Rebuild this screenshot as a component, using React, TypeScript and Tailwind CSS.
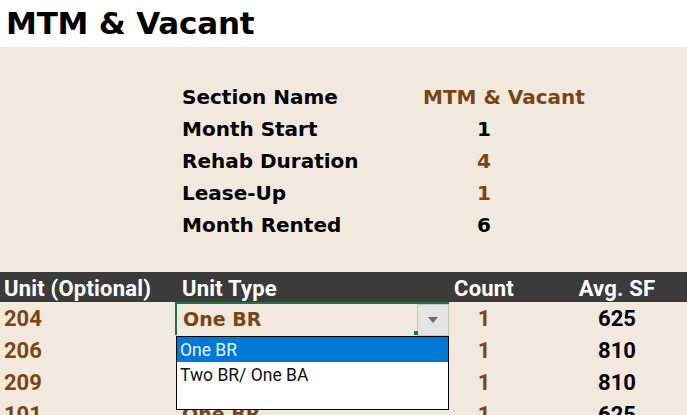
import React from "react";

const brown = "text-[#7a4512]";

const info = [
  { label: "Section Name", value: "MTM & Vacant", brown: true, wide: true },
  { label: "Month Start", value: "1", brown: false },
  { label: "Rehab Duration", value: "4", brown: true },
  { label: "Lease-Up", value: "1", brown: true },
  { label: "Month Rented", value: "6", brown: false },
];

const units = [
  { unit: "204", type: "One BR", count: "1", sf: "625" },
  { unit: "206", type: "Two BR/ One BA", count: "1", sf: "810" },
  { unit: "209", type: "Two BR/ One BA", count: "1", sf: "810" },
  { unit: "101", type: "One BR", count: "1", sf: "625" },
];

const tahoma = "font-['DejaVu_Sans',sans-serif]";
const calibri = "font-['Roboto',sans-serif]";

function App() {
  return (
    <div className="w-[687px] h-[415px] overflow-hidden bg-[#f2e9de] relative">
      <div className={`h-[47px] bg-white pl-[6px] flex items-center ${tahoma} font-bold text-[31px] text-black tracking-[-0.2px]`}>
        MTM &amp; Vacant
      </div>

      <div className="pt-[34px] pl-[182px]">
        {info.map((row) => (
          <div key={row.label} className={`flex items-center h-[32px] ${tahoma} font-bold text-[20px] leading-none`}>
            <div className="w-[241px] text-black">{row.label}</div>
            <div
              className={`${row.wide ? "text-left" : "w-[122px] text-center"} ${
                row.brown ? brown : "text-black"
              }`}
            >
              {row.value}
            </div>
          </div>
        ))}
      </div>

      <div className="mt-[31px]">
        <div className={`grid grid-cols-[176px_273px_70px_1fr] h-[30px] items-center bg-[#3b3b3b] text-white font-bold text-[22px] ${calibri} tracking-[0.2px]`}>
          <div className="pl-[4px] whitespace-nowrap">Unit (Optional)</div>
          <div className="pl-[6px]">Unit Type</div>
          <div className="text-center">Count</div>
          <div className="pl-[28px] text-center">Avg. SF</div>
        </div>

        {units.map((u, i) => (
          <div key={u.unit} className="grid grid-cols-[176px_273px_70px_1fr] h-[32px] items-center font-bold">
            <div className={`pl-[4px] ${calibri} text-[22px] ${brown}`}>{u.unit}</div>
            <div
              className={`h-full flex items-center pl-[6px] ${tahoma} text-[19px] ${brown} ${
                i === 0 ? "border-l-2 border-t-2 border-[#217346] -ml-px" : ""
              }`}
            >
              {u.type}
            </div>
            <div className={`text-center ${calibri} text-[22px] ${brown}`}>{u.count}</div>
            <div className={`pl-[28px] text-center ${calibri} text-[22px] text-black`}>{u.sf}</div>
          </div>
        ))}
      </div>

      {/* cell dropdown button */}
      <div className="absolute left-[417px] top-[304px] w-[32px] h-[32px] bg-[#e4e4e4] border border-[#c6c6c6] flex items-center justify-center">
        <svg width="10" height="6" viewBox="0 0 10 6">
          <path d="M0 0 L10 0 L5 6 Z" fill="#6e6e6e" />
        </svg>
      </div>
      <div className="absolute left-[414px] top-[331px] w-[4px] h-[4px] bg-[#217346]" />

      {/* open list */}
      <div className={`absolute left-[176px] top-[336px] w-[273px] h-[74px] bg-white border border-black ${calibri} text-[17.5px] leading-none`}>
        <div className="h-[25px] bg-[#0078d7] text-[#e8f4ff] flex items-center pl-[3px] pt-[2px]">One BR</div>
        <div className="h-[25px] text-[#111] flex items-center pl-[3px] pt-[2px]">Two BR/ One BA</div>
      </div>
    </div>
  );
}

export default App;
